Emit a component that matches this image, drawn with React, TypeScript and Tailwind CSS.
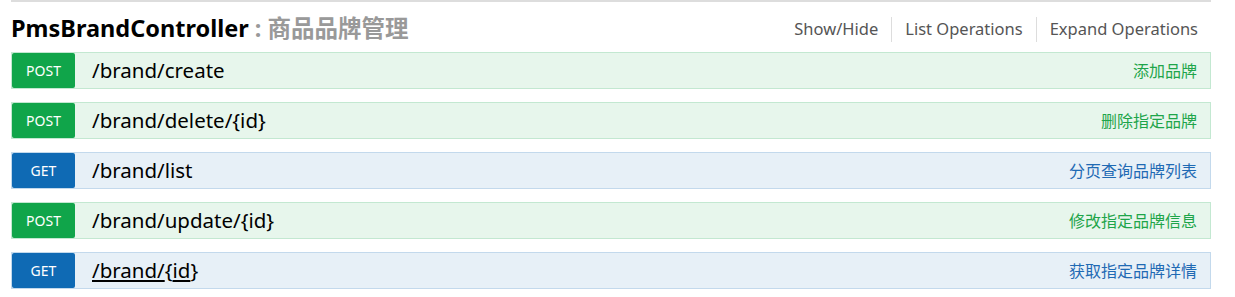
const ops = [
  { method: "POST", path: "/brand/create", summary: "添加品牌" },
  { method: "POST", path: "/brand/delete/{id}", summary: "删除指定品牌" },
  { method: "GET", path: "/brand/list", summary: "分页查询品牌列表" },
  { method: "POST", path: "/brand/update/{id}", summary: "修改指定品牌信息" },
  { method: "GET", path: "/brand/{id}", summary: "获取指定品牌详情", hover: true },
];

function Row({ method, path, summary, hover }: { method: string; path: string; summary: string; hover?: boolean }) {
  const post = method === "POST";
  return (
    <div
      className={
        post
          ? "flex h-[37px] items-center border border-[#c3e8d1] bg-[#e7f6ec]"
          : "flex h-[37px] items-center border border-[#c3d9ec] bg-[#e7f0f7]"
      }
    >
      <span
        className={
          post
            ? "flex h-[35px] w-[63px] items-center justify-center rounded-[2px] bg-[#10a54a] text-[14px] text-white"
            : "flex h-[35px] w-[63px] items-center justify-center rounded-[2px] bg-[#0f6ab4] text-[14px] text-white"
        }
      >
        {method}
      </span>
      <span className="ml-[17px] text-[20.5px] text-black">
        {hover ? (
          <>
            <span className="underline">/brand/</span>
            {"{"}
            <span className="underline">id</span>
            {"}"}
          </>
        ) : (
          path
        )}
      </span>
      <span className={post ? "ml-auto mr-[13px] text-[16px] text-[#1ea54a]" : "ml-auto mr-[13px] text-[16px] text-[#1f6ab4]"}>
        {summary}
      </span>
    </div>
  );
}

export default function App() {
  return (
    <div className="h-[297px] w-[1235px] bg-white font-['Noto_Sans','Noto_Sans_CJK_SC',sans-serif]">
      <div className="ml-[11px] mr-[24px] border-t-2 border-[#ddd]">
        <div className="flex h-[50px] items-center">
          <h2 className="mt-[3px] text-[23.5px] font-bold text-black">
            PmsBrandController
            <span className="text-[#999]"> : 商品品牌管理</span>
          </h2>
          <div className="ml-auto mr-[13px] mt-[5px] flex items-center text-[16.5px] text-[#555]">
            <span className="pr-[13px]">Show/Hide</span>
            <span className="border-l border-[#ddd] px-[13px]">List Operations</span>
            <span className="border-l border-[#ddd] pl-[13px]">Expand Operations</span>
          </div>
        </div>
        <div className="flex flex-col gap-[13px]">
          {ops.map((op) => (
            <Row key={op.path} {...op} />
          ))}
        </div>
      </div>
    </div>
  );
}
